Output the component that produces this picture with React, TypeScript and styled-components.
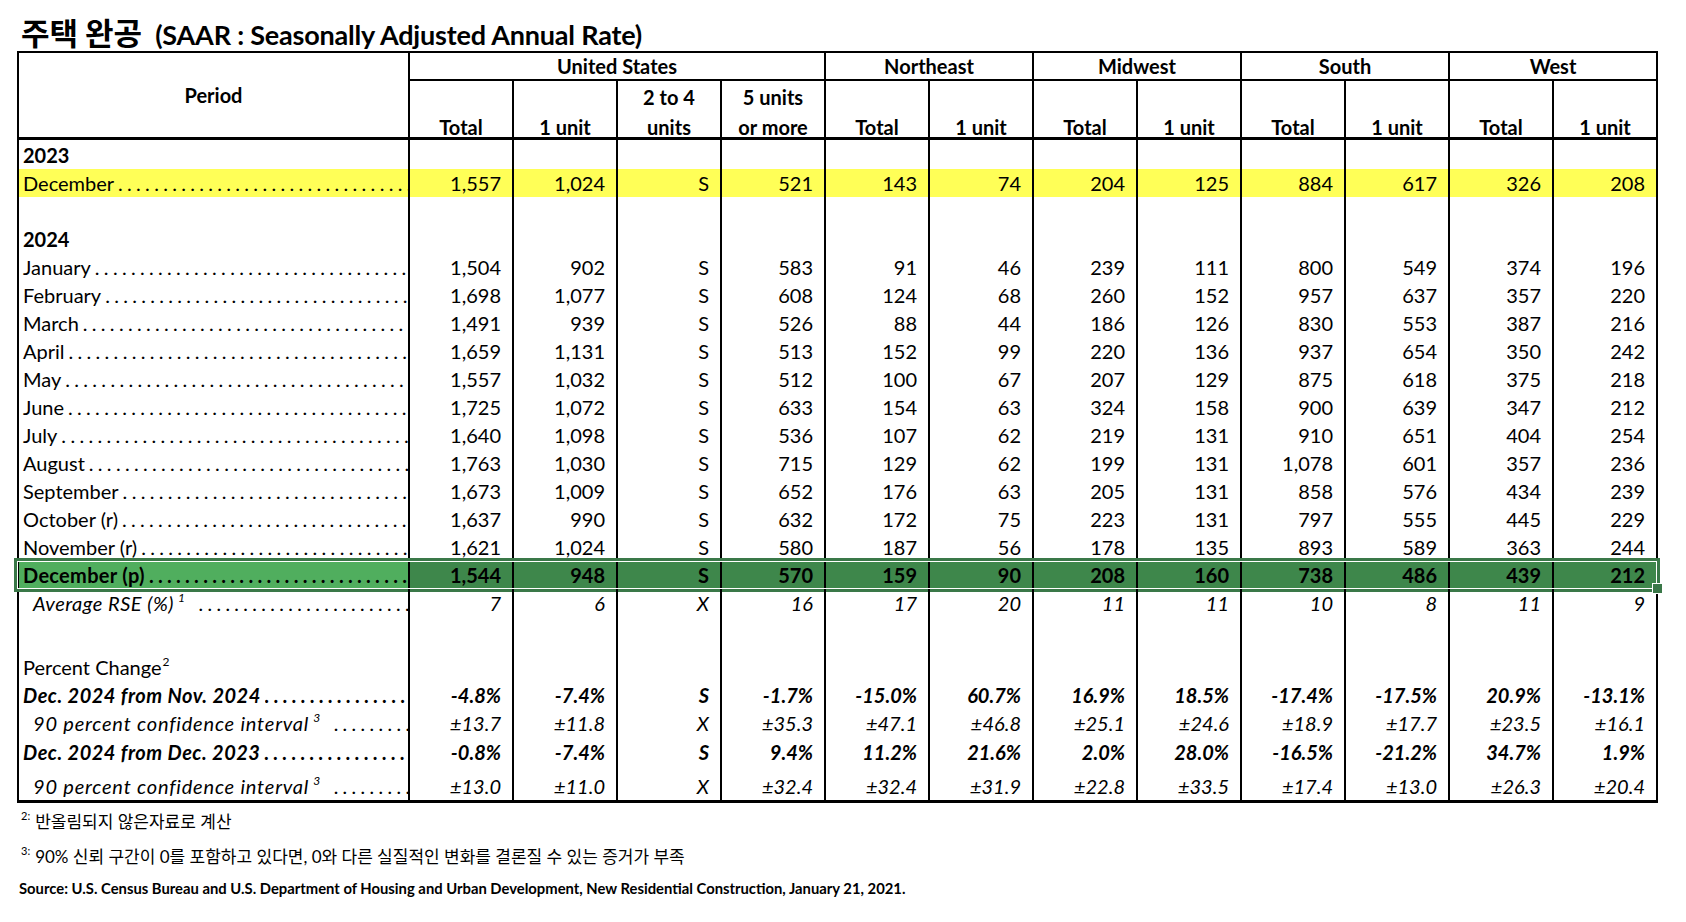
import React from 'react';
import styled, { createGlobalStyle, css } from 'styled-components';

const COLS = '389px repeat(12, 104px)';
const SANS = `Lato, "Noto Sans CJK KR", "Noto Sans", sans-serif`;
const DOTS = '.'.repeat(42);

type Tone = 'yellow' | 'green';
type Face = 'regular' | 'bold' | 'italic' | 'boldItalic';

const GlobalStyle = createGlobalStyle`
  html, body { margin: 0; padding: 0; background: #fff; }
  body { font-family: ${SANS}; color: #000; }
`;

const Page = styled.div`
  box-sizing: border-box;
  width: 1686px;
  height: 922px;
  padding: 16px 0 0 17px;
  overflow: hidden;
`;

const Title = styled.h1`
  margin: 0 0 3px 4px;
  height: 32px;
  line-height: 32px;
  display: flex;
  align-items: baseline;
  gap: 13px;
  font-family: "Noto Sans CJK KR", sans-serif;
  font-size: 31px;
  font-weight: 700;
  white-space: nowrap;
`;

const TitleSub = styled.span`
  font-family: ${SANS};
  font-size: 27px;
  letter-spacing: -0.2px;
`;

const Sheet = styled.div`
  width: max-content;
  border: 2px solid #000;
  border-bottom-width: 3px;
`;

const Head = styled.div`
  display: grid;
  grid-template-columns: ${COLS};
  grid-template-rows: 28px 56px;
  border-bottom: 3px solid #000;
  font-size: 20px;
  font-weight: 700;
`;

const PeriodHead = styled.div`
  grid-column: 1;
  grid-row: 1 / span 2;
  display: flex;
  align-items: center;
  justify-content: center;
`;

const RegionHead = styled.div<{ $span: number }>`
  grid-row: 1;
  grid-column: span ${p => p.$span};
  display: flex;
  align-items: center;
  justify-content: center;
  border-left: 2px solid #000;
  border-bottom: 2px solid #000;
`;

const SubHead = styled.div`
  grid-row: 2;
  display: flex;
  flex-direction: column;
  justify-content: flex-end;
  align-items: center;
  gap: 10px;
  border-left: 2px solid #000;
  line-height: 20px;
`;

const faceCss = (f?: Face) => css`
  font-weight: ${f === 'bold' || f === 'boldItalic' ? 700 : 400};
  font-style: ${f === 'italic' || f === 'boldItalic' ? 'italic' : 'normal'};
`;

const Row = styled.div<{ $h: number; $face?: Face; $bottom?: boolean; $selected?: boolean }>`
  position: relative;
  display: grid;
  grid-template-columns: ${COLS};
  height: ${p => p.$h}px;
  font-size: 20px;
  line-height: 24px;
  ${p => faceCss(p.$face)}
  & > * {
    align-items: ${p => (p.$bottom ? 'flex-end' : 'center')};
    padding-bottom: ${p => (p.$bottom ? 2 : 0)}px;
  }
  ${p =>
    p.$selected &&
    css`
      &::after {
        content: '';
        position: absolute;
        left: -5px;
        right: -4px;
        top: -3px;
        bottom: -3px;
        border: 3px solid #3a7848;
        box-shadow: inset 0 0 0 1px #fff;
        pointer-events: none;
      }
      &::before {
        content: '';
        position: absolute;
        right: -7px;
        bottom: -5px;
        width: 9px;
        height: 9px;
        background: #3a7848;
        border: 1px solid #fff;
        z-index: 2;
      }
    `}
`;

const toneBg = (t: Tone | undefined, light: string, dark: string) =>
  t === 'yellow' ? '#ffff57' : t === 'green' ? (light ? light : dark) : 'transparent';

const Label = styled.div<{ $tone?: Tone; $indent?: number }>`
  display: flex;
  padding-left: ${p => 4 + (p.$indent ?? 0)}px;
  overflow: hidden;
  white-space: nowrap;
  background: ${p => toneBg(p.$tone, '#50ae5e', '')};
`;

const LabelText = styled.span<{ $spread?: number }>`
  flex: none;
  letter-spacing: ${p => p.$spread ?? 0}px;
`;

const Dots = styled.span<{ $gap?: number }>`
  flex: 1 1 0;
  min-width: 0;
  overflow: hidden;
  margin-left: ${p => p.$gap ?? 4}px;
  letter-spacing: 4.3px;
`;

const Sup = styled.sup<{ $near?: boolean }>`
  font-size: 12px;
  line-height: 0;
  vertical-align: 9px;
  margin-left: ${p => (p.$near ? 1 : 4)}px;
  letter-spacing: 0;
`;

const Num = styled.div<{ $tone?: Tone }>`
  display: flex;
  justify-content: flex-end;
  padding-right: 11px;
  border-left: 2px solid #000;
  white-space: nowrap;
  background: ${p => toneBg(p.$tone, '', '#3e874b')};
`;

const Note = styled.p<{ $gap: number }>`
  margin: ${p => p.$gap}px 0 0 4px;
  font-size: 17px;
  line-height: 22px;
  white-space: nowrap;
`;

const NoteMark = styled.sup`
  font-size: 11px;
  line-height: 0;
  vertical-align: 8px;
  margin-right: 5px;
`;

const Source = styled.p`
  margin: 11px 0 0 2px;
  font-size: 14.8px;
  line-height: 18px;
  font-weight: 700;
  white-space: nowrap;
`;

const regions: [string, number][] = [
  ['United States', 4],
  ['Northeast', 2],
  ['Midwest', 2],
  ['South', 2],
  ['West', 2],
];

const subHeads: string[][] = [
  ['Total'],
  ['1 unit'],
  ['2 to 4', 'units'],
  ['5 units', 'or more'],
  ['Total'],
  ['1 unit'],
  ['Total'],
  ['1 unit'],
  ['Total'],
  ['1 unit'],
  ['Total'],
  ['1 unit'],
];

const months: [string, string][] = [
  ['January', '1,504 902 S 583 91 46 239 111 800 549 374 196'],
  ['February', '1,698 1,077 S 608 124 68 260 152 957 637 357 220'],
  ['March', '1,491 939 S 526 88 44 186 126 830 553 387 216'],
  ['April', '1,659 1,131 S 513 152 99 220 136 937 654 350 242'],
  ['May', '1,557 1,032 S 512 100 67 207 129 875 618 375 218'],
  ['June', '1,725 1,072 S 633 154 63 324 158 900 639 347 212'],
  ['July', '1,640 1,098 S 536 107 62 219 131 910 651 404 254'],
  ['August', '1,763 1,030 S 715 129 62 199 131 1,078 601 357 236'],
  ['September', '1,673 1,009 S 652 176 63 205 131 858 576 434 239'],
  ['October (r)', '1,637 990 S 632 172 75 223 131 797 555 445 229'],
  ['November (r)', '1,621 1,024 S 580 187 56 178 135 893 589 363 244'],
];

const split = (s: string) => s.split(' ');
const EMPTY = Array(12).fill('');

const Cells = ({ values, tone }: { values: string[]; tone?: Tone }) => (
  <>
    {values.map((v, i) => (
      <Num key={i} $tone={tone}>
        {v}
      </Num>
    ))}
  </>
);

export default function App() {
  return (
    <Page>
      <GlobalStyle />
      <Title>
        주택 완공<TitleSub>(SAAR : Seasonally Adjusted Annual Rate)</TitleSub>
      </Title>
      <Sheet>
        <Head>
          <PeriodHead>Period</PeriodHead>
          {regions.map(([name, span]) => (
            <RegionHead key={name} $span={span}>
              {name}
            </RegionHead>
          ))}
          {subHeads.map((lines, i) => (
            <SubHead key={i}>
              {lines.map(l => (
                <span key={l}>{l}</span>
              ))}
            </SubHead>
          ))}
        </Head>

        <Row $h={29} $face="bold">
          <Label>2023</Label>
          <Cells values={EMPTY} />
        </Row>
        <Row $h={28}>
          <Label $tone="yellow">
            <LabelText>December</LabelText>
            <Dots>{DOTS}</Dots>
          </Label>
          <Cells tone="yellow" values={split('1,557 1,024 S 521 143 74 204 125 884 617 326 208')} />
        </Row>
        <Row $h={28}>
          <Label />
          <Cells values={EMPTY} />
        </Row>
        <Row $h={28} $face="bold">
          <Label>2024</Label>
          <Cells values={EMPTY} />
        </Row>
        {months.map(([m, v]) => (
          <Row key={m} $h={28}>
            <Label>
              <LabelText>{m}</LabelText>
              <Dots>{DOTS}</Dots>
            </Label>
            <Cells values={split(v)} />
          </Row>
        ))}
        <Row $h={28} $face="bold" $selected>
          <Label $tone="green">
            <LabelText $spread={0.3}>December (p)</LabelText>
            <Dots>{DOTS}</Dots>
          </Label>
          <Cells tone="green" values={split('1,544 948 S 570 159 90 208 160 738 486 439 212')} />
        </Row>
        <Row $h={28} $face="italic">
          <Label $indent={10}>
            <LabelText $spread={0.5}>
              Average RSE (%)<Sup>1</Sup>
            </LabelText>
            <Dots $gap={14}>{DOTS}</Dots>
          </Label>
          <Cells values={split('7 6 X 16 17 20 11 11 10 8 11 9')} />
        </Row>
        <Row $h={36}>
          <Label />
          <Cells values={EMPTY} />
        </Row>
        <Row $h={28}>
          <Label>
            <LabelText>
              Percent Change<Sup $near>2</Sup>
            </LabelText>
          </Label>
          <Cells values={EMPTY} />
        </Row>
        <Row $h={28} $face="boldItalic">
          <Label>
            <LabelText $spread={0.5}>Dec. 2024 from Nov. 2024</LabelText>
            <Dots>{DOTS}</Dots>
          </Label>
          <Cells
            values={split('-4.8% -7.4% S -1.7% -15.0% 60.7% 16.9% 18.5% -17.4% -17.5% 20.9% -13.1%')}
          />
        </Row>
        <Row $h={28} $face="italic">
          <Label $indent={10}>
            <LabelText $spread={0.8}>
              90 percent confidence interval<Sup>3</Sup>
            </LabelText>
            <Dots $gap={14}>{DOTS}</Dots>
          </Label>
          <Cells
            values={split('±13.7 ±11.8 X ±35.3 ±47.1 ±46.8 ±25.1 ±24.6 ±18.9 ±17.7 ±23.5 ±16.1')}
          />
        </Row>
        <Row $h={30} $face="boldItalic">
          <Label>
            <LabelText $spread={0.5}>Dec. 2024 from Dec. 2023</LabelText>
            <Dots>{DOTS}</Dots>
          </Label>
          <Cells values={split('-0.8% -7.4% S 9.4% 11.2% 21.6% 2.0% 28.0% -16.5% -21.2% 34.7% 1.9%')} />
        </Row>
        <Row $h={33} $face="italic" $bottom>
          <Label $indent={10}>
            <LabelText $spread={0.8}>
              90 percent confidence interval<Sup>3</Sup>
            </LabelText>
            <Dots $gap={14}>{DOTS}</Dots>
          </Label>
          <Cells
            values={split('±13.0 ±11.0 X ±32.4 ±32.4 ±31.9 ±22.8 ±33.5 ±17.4 ±13.0 ±26.3 ±20.4')}
          />
        </Row>
      </Sheet>

      <Note $gap={8}>
        <NoteMark>2:</NoteMark>반올림되지 않은자료로 계산
      </Note>
      <Note $gap={13}>
        <NoteMark>3:</NoteMark>90% 신뢰 구간이 0를 포함하고 있다면, 0와 다른 실질적인 변화를 결론질 수 있는 증거가 부족
      </Note>
      <Source>
        Source: U.S. Census Bureau and U.S. Department of Housing and Urban Development, New Residential
        Construction, January 21, 2021.
      </Source>
    </Page>
  );
}
